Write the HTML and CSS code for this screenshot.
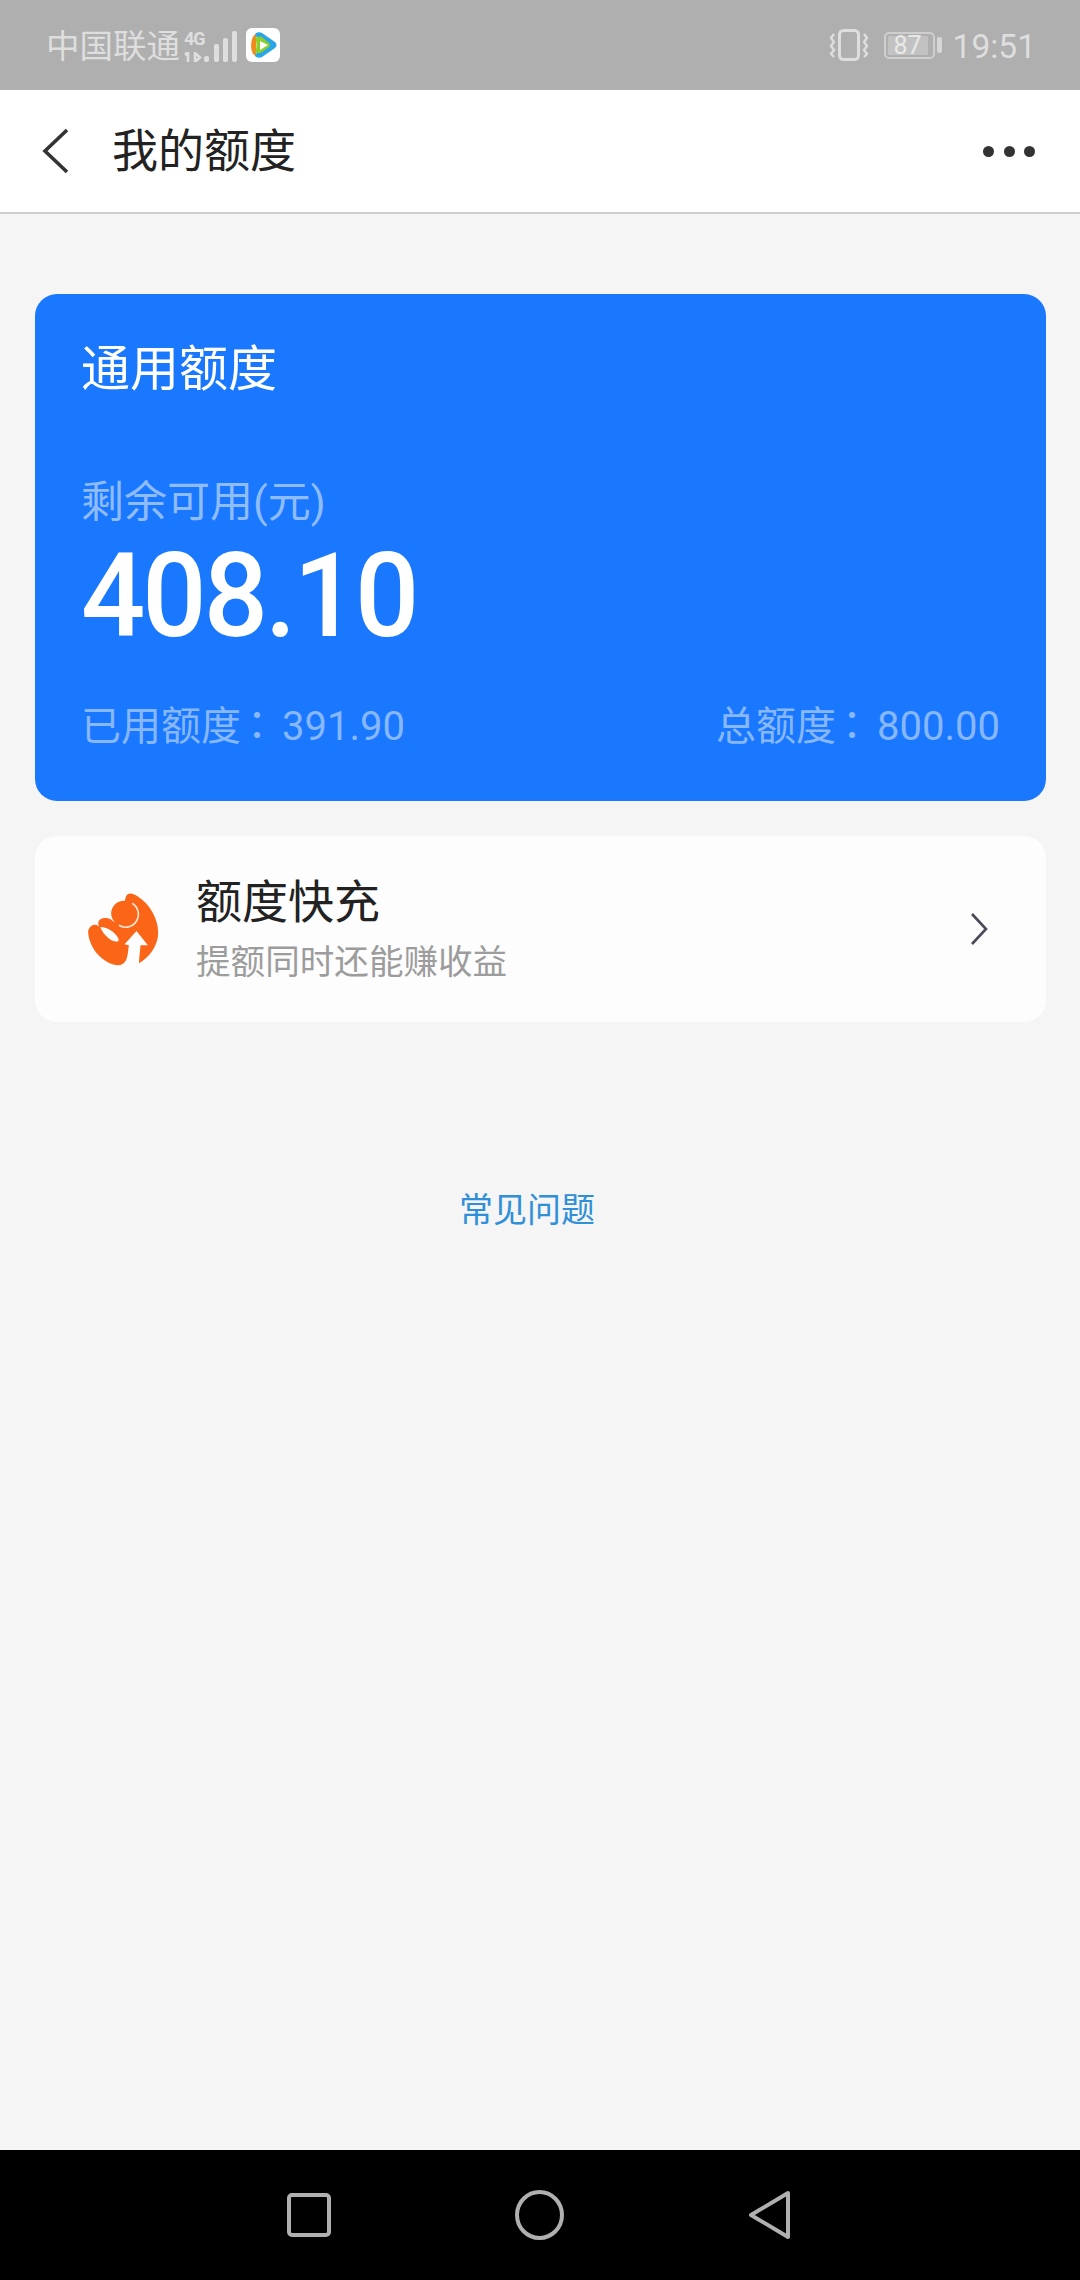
FILE: index.html
```html
<!DOCTYPE html>
<html lang="zh-CN">
<head>
<meta charset="utf-8">
<title>我的额度</title>
<link rel="stylesheet" href="styles.css">
</head>
<body>
<div class="screen">
  <header class="status">
    <div class="status-left">
      <span class="carrier">中国联通</span>
      <div class="net">
        <span class="net-type">4G</span>
        <svg width="18" height="10" viewBox="0 0 18 10">
          <path d="M4 0v10M1 3l3-3M11 1v9l5-4.5z" fill="none" stroke="#dedede" stroke-width="2.6"/>
        </svg>
      </div>
      <svg class="bars" width="33" height="32" viewBox="0 0 33 32">
        <rect x="0" y="25" width="5" height="6" rx="2" fill="#dedede"/>
        <rect x="10" y="13" width="5" height="18" rx="2" fill="#dedede"/>
        <rect x="19" y="7" width="5" height="24" rx="2" fill="#dedede"/>
        <rect x="28" y="0" width="5" height="31" rx="2" fill="#dedede"/>
      </svg>
      <svg class="app" width="34" height="34" viewBox="0 0 34 34">
        <rect width="34" height="34" rx="6" fill="#fff"/>
        <path d="M10 6C4 8 3 26 10 28z" fill="#f08a1d"/>
        <path d="M9 6c2-2 5-2 7-1l13 9c2 2 2 4 0 6L16 29c-2 1-5 1-7-1 4-6 4-16 0-22z" fill="#2aa5e8"/>
        <path d="M9 10c3-2 6-2 8 0l6 5c1 1 1 3 0 4l-7 5c-3 2-5 1-7 0 2-4 2-10 0-14z" fill="#8ccf2a"/>
        <path d="M14 13l8 4-8 5z" fill="#fff"/>
      </svg>
    </div>
    <div class="status-right">
      <svg class="vibrate" width="40" height="32" viewBox="0 0 40 32">
        <rect x="10.5" y="1.5" width="19" height="29" rx="4" fill="none" stroke="#dedede" stroke-width="3"/>
        <path d="M5 5L2 9l3 4-3 4 3 4-3 4 3 3M35 5l3 4-3 4 3 4-3 4 3 4-3 3" fill="none" stroke="#dedede" stroke-width="2.4"/>
      </svg>
      <div class="battery">
        <div class="battery-body"><span class="battery-fill">87</span></div>
        <i class="battery-cap"></i>
      </div>
      <span class="time">19:51</span>
    </div>
  </header>

  <nav class="navbar">
    <svg class="back" width="28" height="46" viewBox="0 0 28 46">
      <path d="M25 2L3 23l22 21" fill="none" stroke="#333" stroke-width="3.6"/>
    </svg>
    <h1 class="nav-title">我的额度</h1>
    <div class="more"><i></i><i></i><i></i></div>
  </nav>

  <main class="content">
    <section class="quota">
      <h2 class="quota-title">通用额度</h2>
      <p class="quota-label">剩余可用(元)</p>
      <p class="quota-amount">408.10</p>
      <div class="quota-foot">
        <span>已用额度<span class="colon" lang="zh-Hant">：</span>391.90</span>
        <span>总额度<span class="colon" lang="zh-Hant">：</span>800.00</span>
      </div>
    </section>

    <section class="boost">
      <svg class="boost-icon" width="72" height="76" viewBox="55 65 215 228">
        <path d="M170 85C175 68 190 70 205 80C245 105 268 150 268 190C268 230 240 265 210 282L215 228L237 228L203 185L167 225L180 228L178 245C175 270 170 285 150 288C105 285 62 240 58 190C57 170 80 158 90 172L88 160C92 145 112 143 125 150L140 160L170 122L190 105L168 95Z" fill="#fa6518"/>
        <circle cx="165" cy="132" r="38" fill="#fa6518" stroke="none"/>
        <path d="M190 102A38 38 0 0 1 150 168" fill="none" stroke="#fde3d2" stroke-width="5"/>
        <path d="M127 122A40 40 0 0 1 165 92L165 70L100 80L110 145Z" fill="#fdfdfd"/>
        <circle cx="165" cy="132" r="33" fill="#fa6518"/>
        <path d="M94 174C108 172 125 180 138 193C147 202 152 210 148 216C130 220 108 203 94 174Z" fill="#fdfdfd"/>
      </svg>
      <div class="boost-text">
        <h3 class="boost-title">额度快充</h3>
        <p class="boost-sub">提额同时还能赚收益</p>
      </div>
      <svg class="chevron" width="18" height="34" viewBox="0 0 18 34">
        <path d="M2 2l14 15L2 32" fill="none" stroke="#4a4a58" stroke-width="2.6"/>
      </svg>
    </section>

    <a class="faq">常见问题</a>
  </main>

  <footer class="sysnav">
    <svg width="44" height="44" viewBox="0 0 44 44"><rect x="2" y="2" width="40" height="40" rx="3" fill="none" stroke="#b0b0b0" stroke-width="4"/></svg>
    <svg width="49" height="50" viewBox="0 0 49 50"><ellipse cx="24.5" cy="25" rx="22.5" ry="23" fill="none" stroke="#b0b0b0" stroke-width="4"/></svg>
    <svg width="43" height="50" viewBox="0 0 43 50"><path d="M40 3L3 25l37 22z" fill="none" stroke="#b0b0b0" stroke-width="4" stroke-linejoin="round"/></svg>
  </footer>
</div>
</body>
</html>
```

FILE: styles.css
```css
* { box-sizing: border-box; }
html, body { margin: 0; padding: 0; }
body { font-family: "Roboto", "Noto Sans CJK SC", sans-serif; background: #f5f5f5; }
h1, h2, h3, p { margin: 0; font-weight: 400; }
.screen { width: 1080px; height: 2280px; display: flex; flex-direction: column; }

.status { height: 90px; background: #afafaf; color: #dedede; display: flex; justify-content: space-between; align-items: center; padding: 3px 44px 0 46px; flex: none; }
.status-left, .status-right { display: flex; align-items: center; }
.carrier { font-size: 33.5px; line-height: 46px; }
.net { display: flex; flex-direction: column; margin-left: 4px; gap: 5px; width: 18px; }
.net-type { font-weight: 700; font-size: 18px; line-height: 16px; letter-spacing: -1px; }
.bars { margin-left: 2px; }
.app { margin-left: 9px; margin-top: -3px; }
.vibrate { margin-right: 15px; margin-top: -3px; }
.battery { display: flex; align-items: center; margin-right: 11px; margin-top: -3px; }
.battery-body { width: 51px; height: 27px; border: 2px solid #cfcfcf; border-radius: 5px; padding: 2px; display: flex; }
.battery-fill { width: 40px; background: #c2c2c2; color: #e8e8e8; font-size: 25px; line-height: 19px; text-align: center; }
.battery-cap { width: 5px; height: 16px; background: #d6d6d6; border-radius: 2px; margin-left: 2px; }
.time { font-size: 33.5px; line-height: 46px; }

.navbar { height: 124px; background: #fff; border-bottom: 2px solid #cfcfcf; display: flex; align-items: center; padding: 0 45px 0 42px; flex: none; }
.nav-title { font-size: 46px; line-height: 60px; color: #222; margin-left: 42px; flex: 1; }
.more { display: flex; gap: 9.5px; }
.more i { width: 11px; height: 11px; border-radius: 50%; background: #333; }

.content { flex: 1; padding: 80px 34px 0 35px; display: flex; flex-direction: column; }
.quota { background: #1a78ff; border-radius: 22px; height: 507px; padding: 48px 46px 0 46px; color: #fff; display: flex; flex-direction: column; }
.quota-title { font-size: 49px; line-height: 56px; }
.quota-label { font-size: 43px; line-height: 56px; color: #8fbcff; margin-top: 76px; }
.quota-amount { font-weight: 500; font-size: 116px; line-height: 120px; letter-spacing: -3px; margin-top: 6px; transform: scaleX(0.975); transform-origin: left center; }
.quota-foot { display: flex; justify-content: space-between; font-size: 40px; line-height: 50px; color: #86b7ff; margin-top: 42px; }
.colon { font-family: "Noto Sans CJK TC", sans-serif; margin: 0 5px 0 -4px; }

.boost { margin-top: 35px; height: 186px; background: #fdfdfd; border-radius: 22px; display: flex; align-items: center; padding: 0 58px 0 52px; }
.boost-text { flex: 1; margin-left: 37px; padding-top: 2px; }
.boost-title { font-size: 46px; line-height: 58px; color: #222; }
.boost-sub { font-size: 34.6px; line-height: 50px; color: #9c9c9c; margin-top: 6px; }

.faq { align-self: center; margin: 163px 0 0 -27px; font-size: 34px; line-height: 50px; color: #2f8fd8; }

.sysnav { height: 130px; background: #000; display: flex; align-items: center; gap: 184px; flex: none; padding: 0 0 0 287px; }
```
